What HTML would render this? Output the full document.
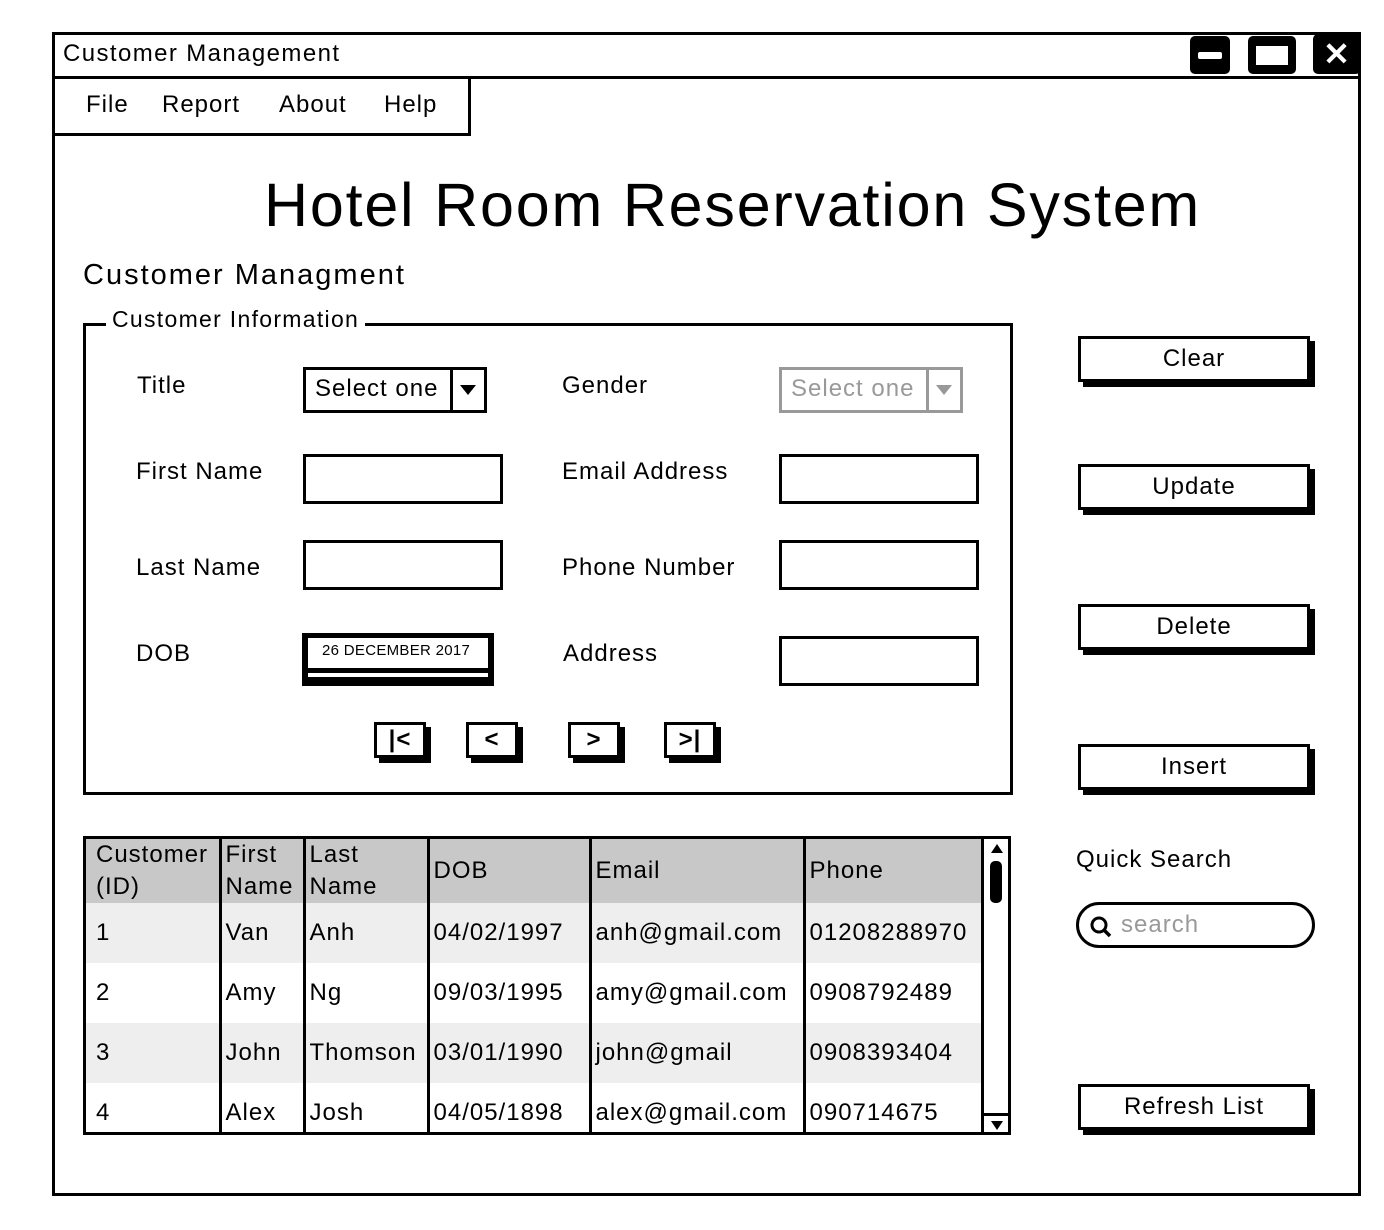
<!DOCTYPE html>
<html><head><style>
body{margin:0;width:1384px;height:1230px;background:#fff;position:relative;font-family:"Liberation Sans",sans-serif;color:#000;overflow:hidden;letter-spacing:1px}
.a{position:absolute}
.t{position:absolute;font-size:24px;white-space:nowrap}
.box{position:absolute;border:3px solid #000;background:#fff;box-sizing:border-box}
.btn{position:absolute;border:3px solid #000;background:#fff;box-sizing:border-box;box-shadow:5px 5px 0 #000;font-size:24px;text-align:center}
.nav{position:absolute;width:52px;height:36px;border:3px solid #000;box-sizing:border-box;box-shadow:5px 5px 0 #000;background:#fff;font-size:24px;font-weight:bold;text-align:center;line-height:30px}
table{border-collapse:collapse;font-size:24px;letter-spacing:1px}
td{border-left:3px solid #000;padding:0 0 0 4px;vertical-align:middle;height:60px;box-sizing:border-box;line-height:32px;white-space:nowrap;overflow:hidden}
td:first-child{border-left:none;padding-left:10px}
</style></head><body>
<div class="box" style="left:52px;top:32px;width:1309px;height:1164px;border-width:3px"></div>
<div class="a" style="left:52px;top:76px;width:1309px;height:3px;background:#000"></div>
<div class="t" style="left:63px;top:40px;font-size:24px;letter-spacing:1.4px">Customer Management</div>
<div class="a" style="left:1190px;top:36px;width:40px;height:38px;background:#000;border-radius:5px"><div class="a" style="left:8px;top:16px;width:24px;height:7px;background:#fff;border-radius:2px"></div></div>
<div class="a" style="left:1248px;top:36px;width:48px;height:38px;background:#000;border-radius:5px"><div class="a" style="left:8px;top:10px;width:32px;height:19px;background:#fff"></div></div>
<div class="a" style="left:1313px;top:34px;width:48px;height:40px;background:#000;border-radius:5px;color:#fff;font-size:32px;font-weight:bold;text-align:center;line-height:40px">✕</div>
<div class="box" style="left:52px;top:76px;width:419px;height:60px"></div>
<div class="t" style="left:86px;top:91px">File</div>
<div class="t" style="left:162px;top:91px">Report</div>
<div class="t" style="left:279px;top:91px">About</div>
<div class="t" style="left:384px;top:91px">Help</div>
<div class="t" style="left:264px;top:170px;font-size:61px;letter-spacing:1.8px">Hotel Room Reservation System</div>
<div class="t" style="left:83px;top:259px;font-size:29px;letter-spacing:2px">Customer Managment</div>
<div class="box" style="left:83px;top:323px;width:930px;height:472px"></div>
<div class="t" style="left:106px;top:306px;background:#fff;padding:0 6px;font-size:23px;letter-spacing:1.3px">Customer Information</div>
<div class="t" style="left:137px;top:372px">Title</div>
<div class="t" style="left:136px;top:458px">First Name</div>
<div class="t" style="left:136px;top:554px">Last Name</div>
<div class="t" style="left:136px;top:640px">DOB</div>
<div class="t" style="left:562px;top:372px">Gender</div>
<div class="t" style="left:562px;top:458px">Email Address</div>
<div class="t" style="left:562px;top:554px">Phone Number</div>
<div class="t" style="left:563px;top:640px">Address</div>
<div class="box" style="left:303px;top:367px;width:184px;height:46px"><div class="t" style="left:9px;top:5px">Select one</div><div class="a" style="left:144px;top:0;width:3px;height:40px;background:#000"></div><div class="a" style="left:154px;top:15px;border:8px solid transparent;border-top:10px solid #000"></div></div>
<div class="box" style="left:779px;top:367px;width:184px;height:46px;border-color:#999"><div class="t" style="left:9px;top:5px;color:#999">Select one</div><div class="a" style="left:144px;top:0;width:3px;height:40px;background:#999"></div><div class="a" style="left:154px;top:15px;border:8px solid transparent;border-top:10px solid #999"></div></div>
<div class="box" style="left:303px;top:454px;width:200px;height:50px"></div>
<div class="box" style="left:303px;top:540px;width:200px;height:50px"></div>
<div class="box" style="left:779px;top:454px;width:200px;height:50px"></div>
<div class="box" style="left:779px;top:540px;width:200px;height:50px"></div>
<div class="box" style="left:779px;top:636px;width:200px;height:50px"></div>
<div class="a" style="left:302px;top:633px;width:192px;height:53px;background:#000"><div class="a" style="left:6px;top:5px;width:180px;height:30px;background:#fff"></div><div class="a" style="left:6px;top:40px;width:180px;height:4px;background:#fff"></div><div class="t" style="left:20px;top:9px;font-size:15px;letter-spacing:0.3px">26 DECEMBER 2017</div></div>
<div class="nav" style="left:374px;top:722px">|&lt;</div>
<div class="nav" style="left:466px;top:722px">&lt;</div>
<div class="nav" style="left:568px;top:722px">&gt;</div>
<div class="nav" style="left:664px;top:722px">&gt;|</div>
<div class="btn" style="left:1078px;top:336px;width:232px;height:46px;line-height:40px">Clear</div>
<div class="btn" style="left:1078px;top:464px;width:232px;height:46px;line-height:40px">Update</div>
<div class="btn" style="left:1078px;top:604px;width:232px;height:46px;line-height:40px">Delete</div>
<div class="btn" style="left:1078px;top:744px;width:232px;height:46px;line-height:40px">Insert</div>
<div class="btn" style="left:1078px;top:1084px;width:232px;height:46px;line-height:40px">Refresh List</div>
<div class="t" style="left:1076px;top:846px">Quick Search</div>
<div class="box" style="left:1076px;top:902px;width:239px;height:46px;border-radius:23px"><svg class="a" style="left:10px;top:10px" width="24" height="24"><circle cx="10" cy="10" r="7" fill="none" stroke="#000" stroke-width="3"/><line x1="15" y1="15" x2="21" y2="21" stroke="#000" stroke-width="3.5"/></svg><div class="t" style="left:42px;top:6px;color:#999">search</div></div>
<div class="box" style="left:83px;top:836px;width:928px;height:299px;overflow:hidden">
<table style="position:absolute;left:0;top:0;width:895px;table-layout:fixed">
<tr style="background:#c8c8c8;"><td style="width:134px;height:63px">Customer<br>(ID)</td><td style="width:84px">First<br>Name</td><td style="width:124px">Last<br>Name</td><td style="width:162px">DOB</td><td style="width:214px">Email</td><td>Phone</td></tr>
<tr style="background:#eee"><td>1</td><td>Van</td><td>Anh</td><td>04/02/1997</td><td>anh@gmail.com</td><td>01208288970</td></tr>
<tr><td>2</td><td>Amy</td><td>Ng</td><td>09/03/1995</td><td>amy@gmail.com</td><td>0908792489</td></tr>
<tr style="background:#eee"><td>3</td><td>John</td><td>Thomson</td><td>03/01/1990</td><td>john@gmail</td><td>0908393404</td></tr>
<tr><td>4</td><td>Alex</td><td>Josh</td><td>04/05/1898</td><td>alex@gmail.com</td><td>090714675</td></tr>
</table>
<div class="a" style="left:895px;top:0;width:3px;height:296px;background:#000"></div>
<div class="a" style="left:905px;top:5px;border:6px solid transparent;border-bottom:9px solid #000;border-top:none"></div>
<div class="a" style="left:904px;top:22px;width:12px;height:42px;background:#000;border-radius:5px"></div>
<div class="a" style="left:898px;top:274px;width:27px;height:3px;background:#000"></div>
<div class="a" style="left:905px;top:282px;border:6px solid transparent;border-top:9px solid #000;border-bottom:none"></div>
</div>
</body></html>
